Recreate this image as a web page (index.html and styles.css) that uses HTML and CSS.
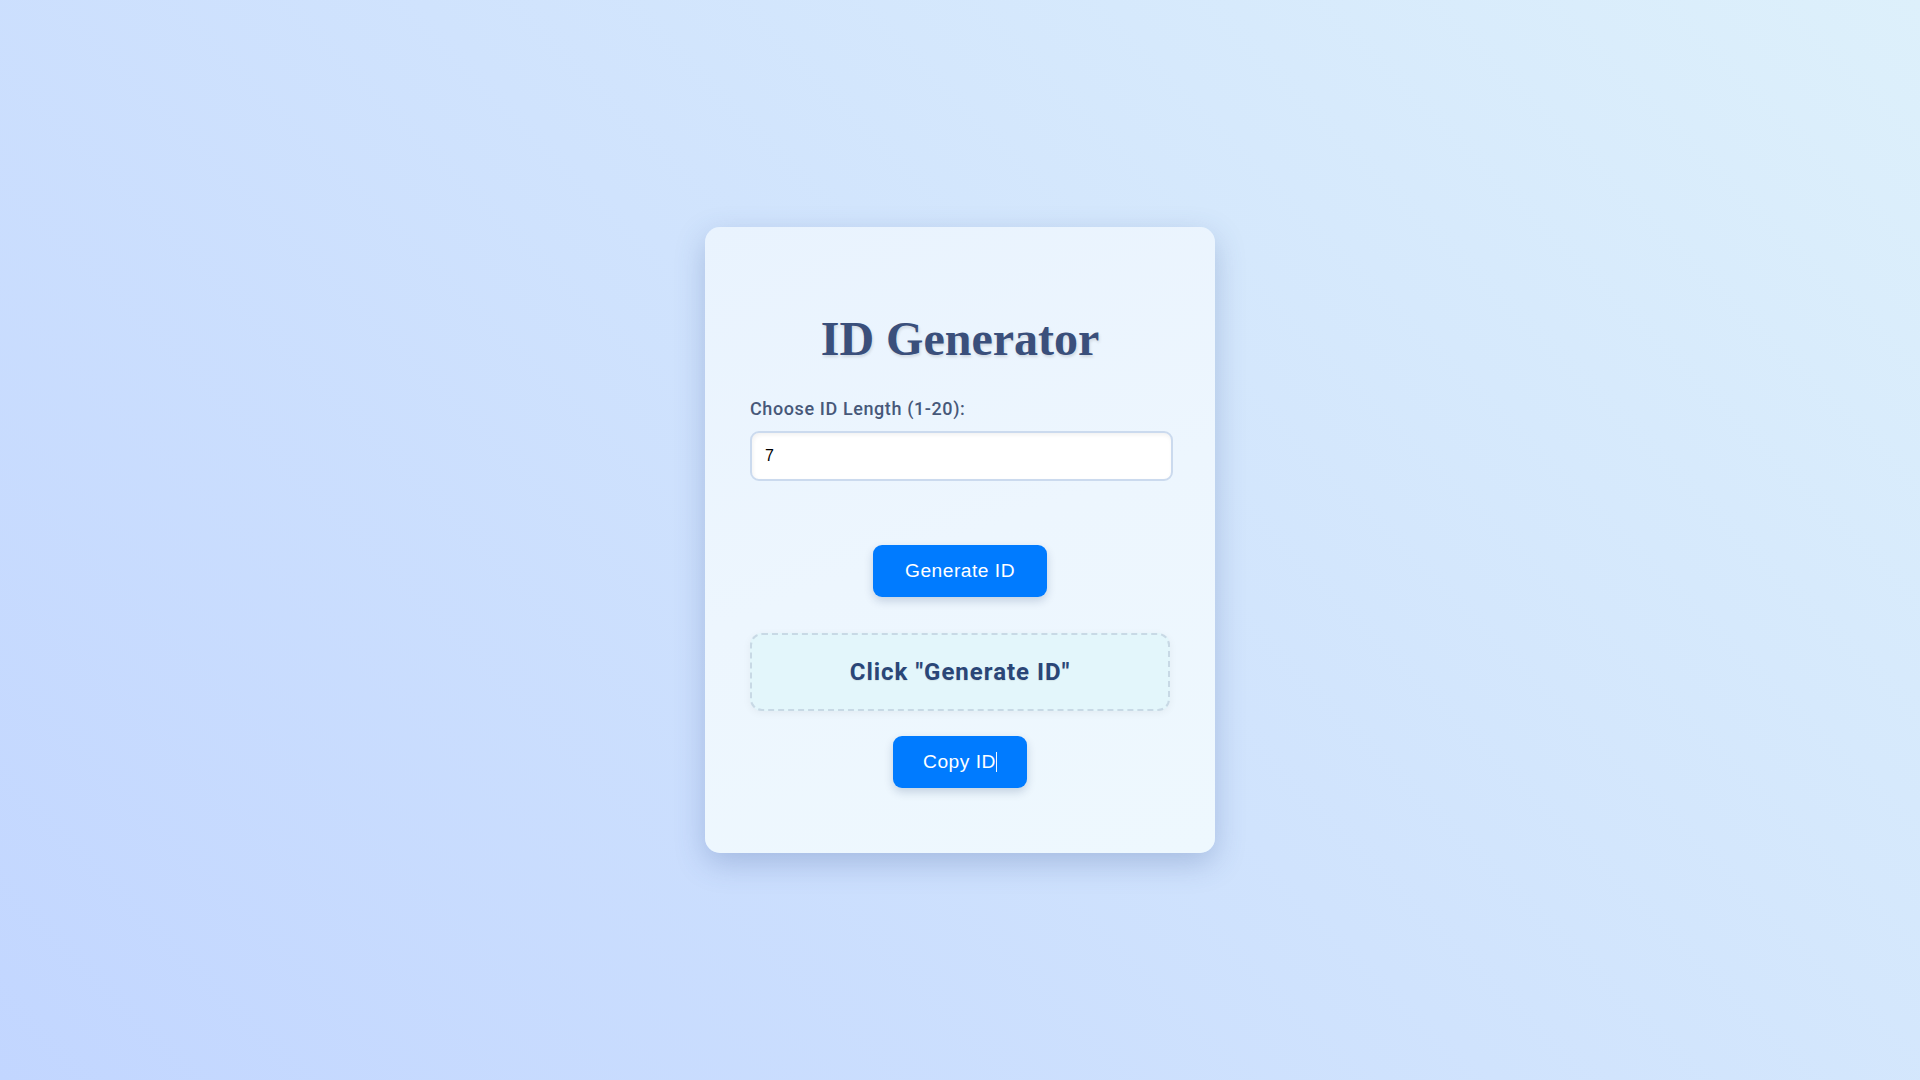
FILE: index.html
```html
<!DOCTYPE html>
<html lang="en">
<head>
<meta charset="UTF-8">
<title>ID Generator</title>
<link rel="stylesheet" href="styles.css">
</head>
<body>
<main class="card">
  <h1 class="title">ID Generator</h1>
  <label class="label" for="len">Choose ID Length (1-20):</label>
  <input class="input" id="len" type="number" value="7" min="1" max="20">
  <div class="actions">
    <button class="btn btn-generate">Generate ID</button>
  </div>
  <div class="result">Click "Generate ID"</div>
  <div class="actions">
    <button class="btn btn-copy">Copy ID<span class="caret"></span></button>
  </div>
</main>
</body>
</html>
```
FILE: styles.css
```css
* { box-sizing: border-box; }
html, body { height: 100%; }
body {
  margin: 0;
  display: flex;
  align-items: center;
  justify-content: center;
  background: linear-gradient(45deg, #c2d6ff 0%, #d0e3fd 50%, #ddf0fb 100%);
  font-family: Roboto, "Liberation Sans", Arial, sans-serif;
}
.card {
  width: 510px;
  height: 626px;
  padding: 45px 45px 65px;
  border-radius: 15px;
  background: linear-gradient(160deg, #e9f3fe 0%, #edf6fe 50%, #eef8fe 100%);
  box-shadow: 0 10px 30px rgba(60, 90, 150, 0.28);
  display: flex;
  flex-direction: column;
}
.title {
  margin: 39px 0 31px;
  text-align: center;
  font-family: "Liberation Serif", "Times New Roman", serif;
  font-weight: 700;
  font-size: 48px;
  line-height: 56px;
  color: #3a4f7b;
  text-shadow: 1px 2px 3px rgba(0, 0, 0, 0.12);
}
.label {
  display: block;
  font-family: Roboto, sans-serif;
  font-weight: 500;
  font-size: 18px;
  letter-spacing: 0.6px;
  line-height: 21px;
  color: #475879;
  margin-bottom: 12px;
}
.input {
  width: calc(100% + 3px);
  height: 50px;
  border: 2px solid #cbdaee;
  border-radius: 9px;
  background: #fff;
  padding: 0 13px;
  font-family: "Liberation Sans", Arial, sans-serif;
  font-size: 16px;
  color: #000;
  box-shadow: inset 1px 2px 4px rgba(0, 0, 0, 0.06);
  outline: none;
  -moz-appearance: textfield;
}
.input::-webkit-outer-spin-button,
.input::-webkit-inner-spin-button { -webkit-appearance: none; margin: 0; }
.actions {
  display: flex;
  justify-content: center;
}
.btn {
  position: relative;
  height: 52px;
  border: none;
  border-radius: 9px;
  background: #007bff;
  color: #fff;
  font-family: "Liberation Sans", Arial, sans-serif;
  font-size: 19.2px;
  letter-spacing: 0.5px;
  box-shadow: 0 4px 10px rgba(0, 40, 90, 0.18);
  cursor: pointer;
}
.btn-generate {
  margin-top: 64px;
  padding: 0 32px;
}
.btn-copy {
  margin-top: 25px;
  padding: 0 30px;
}
.caret {
  display: inline-block;
  width: 1px;
  height: 20px;
  background: #f4f8ff;
  vertical-align: -4px;
  margin-left: 0;
}
.result {
  margin-top: 36px;
  height: 78px;
  border: 2px dashed #c8d9e5;
  border-radius: 12px;
  background: #e3f6fb;
  display: flex;
  align-items: center;
  justify-content: center;
  font-family: Roboto, sans-serif;
  font-weight: 700;
  font-size: 24px;
  letter-spacing: 1px;
  color: #2a4677;
  box-shadow: 0 2px 8px rgba(0, 0, 0, 0.05);
  text-shadow: 0 1px 1px rgba(0, 0, 0, 0.08);
}
```
